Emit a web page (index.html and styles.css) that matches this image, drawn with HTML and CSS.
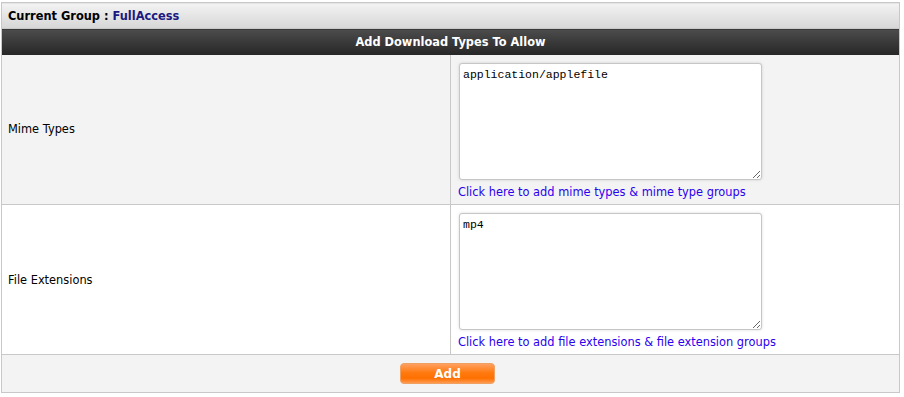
FILE: index.html
```html
<!DOCTYPE html>
<html lang="en">
<head>
    <meta charset="UTF-8">
    <title>Download Types</title>
    <link rel="stylesheet" href="styles.css">
</head>
<body>
    <table class="panel">
        <tr>
            <td colspan="2" class="group-bar">Current Group : <span class="group-name">FullAccess</span></td>
        </tr>
        <tr>
            <th colspan="2" class="title-bar">Add Download Types To Allow</th>
        </tr>
        <tr class="row-alt">
            <td class="label-cell">Mime Types</td>
            <td class="field-cell">
                <textarea>application/applefile</textarea>
                <a href="#" class="field-link">Click here to add mime types &amp; mime type groups</a>
            </td>
        </tr>
        <tr>
            <td class="label-cell">File Extensions</td>
            <td class="field-cell">
                <textarea>mp4</textarea>
                <a href="#" class="field-link">Click here to add file extensions &amp; file extension groups</a>
            </td>
        </tr>
        <tr class="row-alt">
            <td colspan="2" class="action-cell"><button class="btn-add">Add</button></td>
        </tr>
    </table>
</body>
</html>
```

FILE: styles.css
```css
* {
    box-sizing: border-box;
}

body {
    margin: 0;
    padding: 2px 0 0 1px;
    background: #fff;
    font-family: Verdana, "DejaVu Sans", sans-serif;
    font-size: 11.4px;
    color: #000;
}

.panel {
    width: 899px;
    border-collapse: collapse;
    border: 1px solid #c8c8c8;
}

.panel td, .panel th {
    padding: 0;
}

.group-bar {
    height: 26px;
    padding-left: 6px !important;
    background: linear-gradient(#f3f3f3, #d6d6d6);
    font-weight: bold;
    border-bottom: 1px solid #c8c8c8;
}

.group-name {
    color: #1a1a80;
}

.title-bar {
    height: 26px;
    background: linear-gradient(#4c4c4c, #262626);
    color: #fff;
    font-weight: bold;
    text-align: center;
}

.panel tr {
    background: #fff;
}

.panel tr.row-alt {
    background: #f3f3f3;
}

.label-cell {
    width: 449px;
    padding-left: 6px !important;
    border-right: 1px solid #c8c8c8;
    border-bottom: 1px solid #c8c8c8;
}

.field-cell {
    height: 150px;
    padding: 8px 0 5px 7px !important;
    border-bottom: 1px solid #c8c8c8;
    vertical-align: top;
}

textarea {
    display: block;
    width: 303px;
    height: 117px;
    margin-left: 1px;
    padding: 4px 3px;
    border: 1px solid #c6c6c6;
    border-radius: 3px;
    box-shadow: 0 0 3px rgba(0, 0, 0, 0.15);
    font-family: "Liberation Mono", "Courier New", monospace;
    font-size: 11.5px;
    resize: both;
}

.field-link {
    display: block;
    margin-top: 5px;
    color: #2a00f0;
    text-decoration: none;
}

.action-cell {
    height: 38px;
    padding-right: 6px !important;
    text-align: center;
}

.btn-add {
    width: 95px;
    height: 21px;
    border: 1px solid #f0a060;
    border-radius: 4px;
    background: linear-gradient(#ffa060, #ff7a10 45%, #ff7000 75%, #ff9a50);
    color: #fff;
    font-family: Verdana, "DejaVu Sans", sans-serif;
    font-size: 12px;
    font-weight: bold;
    cursor: pointer;
}
```
